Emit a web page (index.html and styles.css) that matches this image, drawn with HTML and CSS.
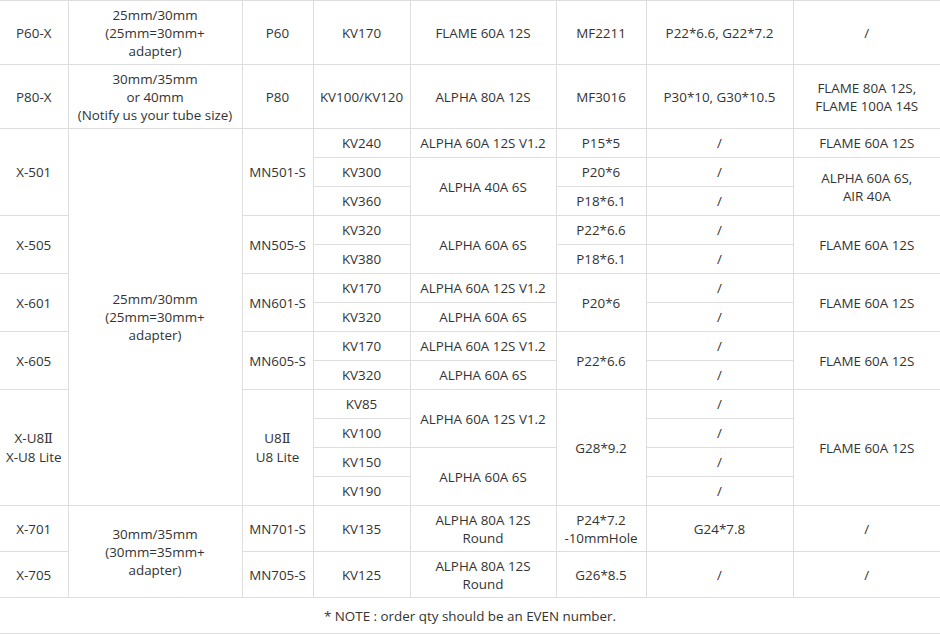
FILE: index.html
```html
<!DOCTYPE html>
<html>
<head>
<meta charset="utf-8">
<link rel="stylesheet" href="styles.css">
</head>
<body>
<table class="spec">
<colgroup>
<col class="c1"><col class="c2"><col class="c3"><col class="c4"><col class="c5"><col class="c6"><col class="c7"><col class="c8">
</colgroup>
<tbody>
<tr class="r-big">
<td>P60-X</td><td>25mm/30mm<br>(25mm=30mm+<br>adapter)</td><td>P60</td><td>KV170</td><td>FLAME 60A 12S</td><td>MF2211</td><td>P22*6.6, G22*7.2</td><td>/</td>
</tr>
<tr class="r-big2">
<td>P80-X</td><td>30mm/35mm<br>or 40mm<br>(Notify us your tube size)</td><td>P80</td><td>KV100/KV120</td><td>ALPHA 80A 12S</td><td>MF3016</td><td>P30*10, G30*10.5</td><td>FLAME 80A 12S,<br>FLAME 100A 14S</td>
</tr>
<tr class="r-s">
<td rowspan="3">X-501</td><td rowspan="13">25mm/30mm<br>(25mm=30mm+<br>adapter)</td><td rowspan="3">MN501-S</td><td>KV240</td><td>ALPHA 60A 12S V1.2</td><td>P15*5</td><td>/</td><td>FLAME 60A 12S</td>
</tr>
<tr class="r-s">
<td>KV300</td><td rowspan="2">ALPHA 40A 6S</td><td>P20*6</td><td>/</td><td rowspan="2">ALPHA 60A 6S,<br>AIR 40A</td>
</tr>
<tr class="r-s">
<td>KV360</td><td>P18*6.1</td><td>/</td>
</tr>
<tr class="r-s">
<td rowspan="2">X-505</td><td rowspan="2">MN505-S</td><td>KV320</td><td rowspan="2">ALPHA 60A 6S</td><td>P22*6.6</td><td>/</td><td rowspan="2">FLAME 60A 12S</td>
</tr>
<tr class="r-s">
<td>KV380</td><td>P18*6.1</td><td>/</td>
</tr>
<tr class="r-s">
<td rowspan="2">X-601</td><td rowspan="2">MN601-S</td><td>KV170</td><td>ALPHA 60A 12S V1.2</td><td rowspan="2">P20*6</td><td>/</td><td rowspan="2">FLAME 60A 12S</td>
</tr>
<tr class="r-s">
<td>KV320</td><td>ALPHA 60A 6S</td><td>/</td>
</tr>
<tr class="r-s">
<td rowspan="2">X-605</td><td rowspan="2">MN605-S</td><td>KV170</td><td>ALPHA 60A 12S V1.2</td><td rowspan="2">P22*6.6</td><td>/</td><td rowspan="2">FLAME 60A 12S</td>
</tr>
<tr class="r-s">
<td>KV320</td><td>ALPHA 60A 6S</td><td>/</td>
</tr>
<tr class="r-s">
<td rowspan="4">X-U8<span class="roman">Ⅱ</span><br>X-U8 Lite</td><td rowspan="4">U8<span class="roman">Ⅱ</span><br>U8 Lite</td><td>KV85</td><td rowspan="2">ALPHA 60A 12S V1.2</td><td rowspan="4">G28*9.2</td><td>/</td><td rowspan="4">FLAME 60A 12S</td>
</tr>
<tr class="r-s">
<td>KV100</td><td>/</td>
</tr>
<tr class="r-s">
<td>KV150</td><td rowspan="2">ALPHA 60A 6S</td><td>/</td>
</tr>
<tr class="r-s">
<td>KV190</td><td>/</td>
</tr>
<tr class="r-m">
<td>X-701</td><td rowspan="2">30mm/35mm<br>(30mm=35mm+<br>adapter)</td><td>MN701-S</td><td>KV135</td><td>ALPHA 80A 12S<br>Round</td><td>P24*7.2<br>-10mmHole</td><td>G24*7.8</td><td>/</td>
</tr>
<tr class="r-m2">
<td>X-705</td><td>MN705-S</td><td>KV125</td><td>ALPHA 80A 12S<br>Round</td><td>G26*8.5</td><td>/</td><td>/</td>
</tr>
<tr class="r-note">
<td colspan="8">* NOTE : order qty should be an EVEN number.</td>
</tr>
</tbody>
</table>
</body>
</html>
```

FILE: styles.css
```css
html, body {
  margin: 0;
  padding: 0;
  background: #ffffff;
}
.spec {
  width: 940px;
  table-layout: fixed;
  border-collapse: collapse;
  font-family: "Open Sans", "Noto Sans", sans-serif;
  font-size: 13.4px;
  line-height: 18px;
  color: #333333;
}
.spec td {
  border: 1px solid #dedede;
  padding: 0;
  text-align: center;
  vertical-align: middle;
}
.roman {
  font-family: "DejaVu Serif", "Noto Sans CJK SC", serif;
  font-size: 13px;
}
.c1 { width: 68px; }
.c2 { width: 174px; }
.c3 { width: 71px; }
.c4 { width: 97px; }
.c5 { width: 146px; }
.c6 { width: 90px; }
.c7 { width: 147px; }
.c8 { width: 147px; }
.r-big td { height: 63px; }
.r-big2 td { height: 63px; }
.r-s td { height: 28px; }
.r-m td { height: 45px; }
.r-m2 td { height: 45px; }
.r-note td { height: 35px; }
.spec td:first-child { border-left: none; }
.spec td:last-child { border-right: none; }
```
